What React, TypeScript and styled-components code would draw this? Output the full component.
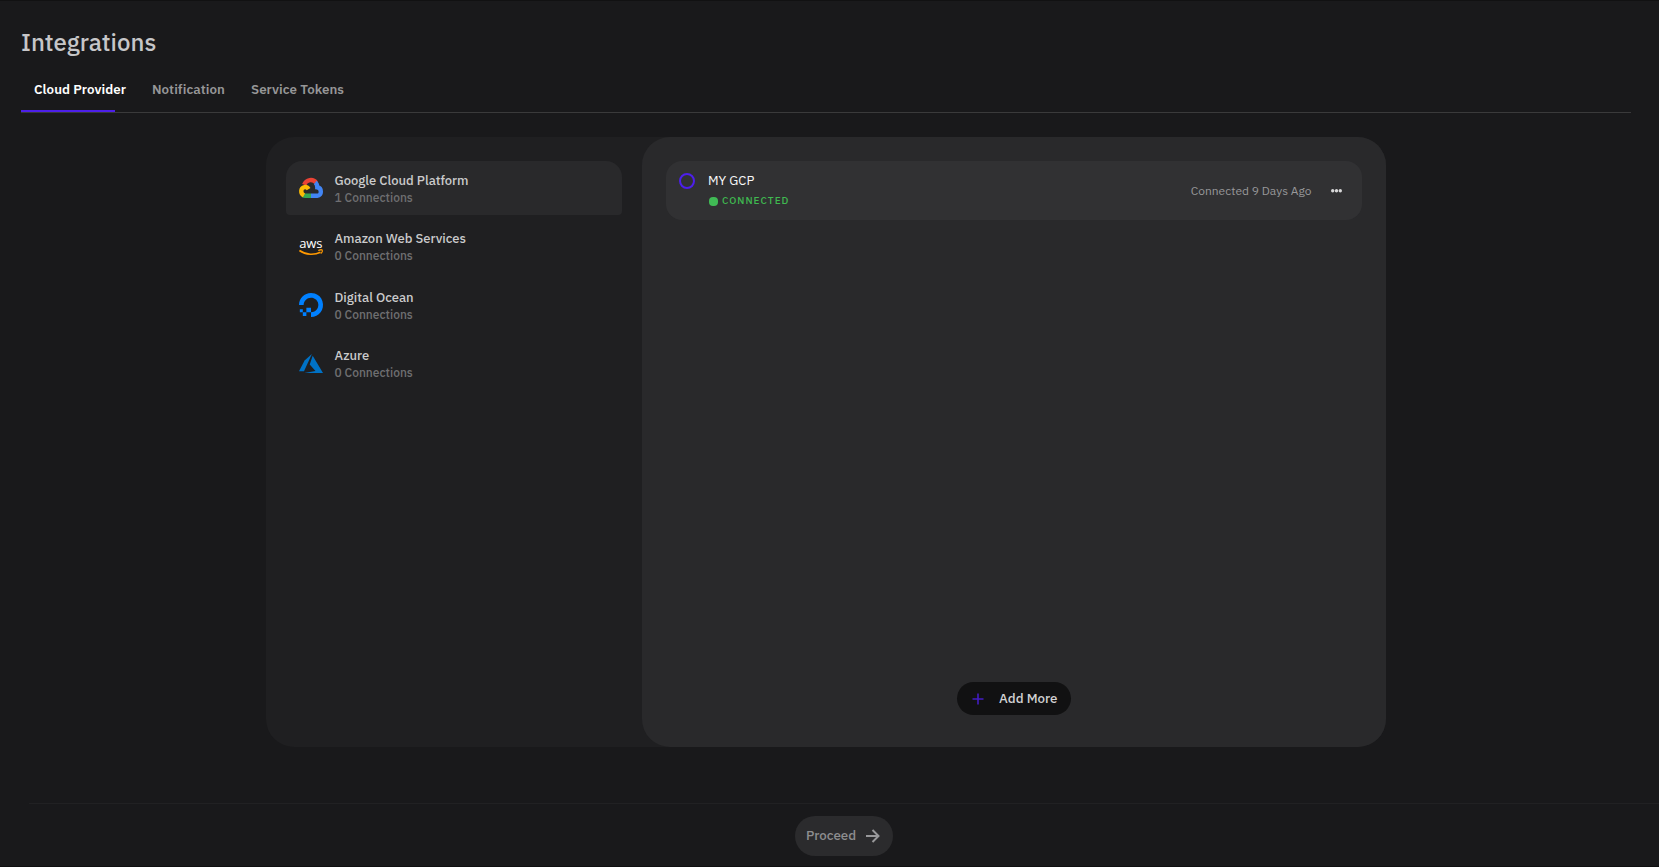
import React from "react";
import styled, { createGlobalStyle } from "styled-components";

const Global = createGlobalStyle`
  *{box-sizing:border-box}
  body{margin:0;background:#19191b;font-family:"IBM Plex Sans",Roboto,sans-serif;overflow:hidden}
  button{font-family:inherit;border:0;padding:0;background:none;text-align:left;white-space:nowrap}
`;

const Page = styled.div`
  height: 867px;
  display: flex;
  flex-direction: column;
  background: #19191b;
  border-top: 1px solid #111112;
  border-bottom: 1px solid #0f0f10;
`;
const Title = styled.h1`
  margin: 25px 0 0 21px;
  font-size: 24px;
  line-height: 32px;
  font-weight: 500;
  color: #c6c6c8;
`;
const Tabs = styled.nav`
  margin: 14px 28px 0 21px;
  height: 41px;
  display: flex;
  gap: 26px;
  padding-left: 13px;
  border-bottom: 1px solid #3a3a3b;
`;
const Tab = styled.button<{ $active?: boolean }>`
  height: 35px;
  font-size: 13.333px;
  line-height: 35px;
  font-weight: 600;
  letter-spacing: 0.05px;
  color: ${(p) => (p.$active ? "#fff" : "#969697")};
`;
const Indicator = styled.div`
  width: 94px;
  height: 2px;
  margin: -3px 0 0 21px;
  background: #4d1fea;
`;
const Board = styled.main`
  margin: 25px 0 0 266px;
  width: 1120px;
  height: 610px;
  display: flex;
  border-radius: 28px;
  background: #1f1f21;
`;
const Providers = styled.section`
  width: 376px;
  padding: 24px 20px;
  display: flex;
  flex-direction: column;
  gap: 4.4px;
`;
const Provider = styled.button<{ $active?: boolean }>`
  height: 54px;
  display: flex;
  align-items: center;
  gap: 11.5px;
  padding: 0 13px;
  border-radius: 16px 16px 4px 4px;
  background: ${(p) => (p.$active ? "#29292b" : "transparent")};
  svg {
    width: 24px;
    height: 24px;
    overflow: visible;
  }
`;
const Label = styled.div`
  padding-top: 2px;
`;
const Name = styled.div`
  font-size: 13px;
  line-height: 17px;
  font-weight: 500;
  color: #cbcbcc;
`;
const Count = styled.div`
  font-size: 12px;
  line-height: 17px;
  font-weight: 500;
  color: #6f6f71;
`;
const Connections = styled.section`
  flex: 1;
  padding: 24px 24px 32px;
  display: flex;
  flex-direction: column;
  align-items: center;
  justify-content: space-between;
  border-radius: 28px;
  background: #29292b;
`;
const Connection = styled.article`
  width: 100%;
  height: 59px;
  display: flex;
  padding: 0 20px 0 13px;
  border-radius: 16px;
  background: #313133;
`;
const Ring = styled.span`
  width: 16px;
  height: 16px;
  margin: 12px 13px 0 0;
  border: 2px solid #4d1fea;
  border-radius: 50%;
`;
const Details = styled.div`
  flex: 1;
  padding-top: 10px;
`;
const ConnectionName = styled.div`
  font-size: 13px;
  line-height: 19px;
  color: #f8f8f8;
`;
const Status = styled.div`
  display: flex;
  align-items: center;
  gap: 4px;
  margin-top: 3px;
  padding-left: 1px;
  font-size: 10px;
  line-height: 15px;
  font-weight: 500;
  letter-spacing: 1px;
  color: #3fb950;
  &::before {
    content: "";
    width: 9px;
    height: 9px;
    margin-top: 1px;
    border-radius: 4px;
    background: #40ba55;
  }
`;
const Age = styled.div`
  align-self: center;
  font-size: 12px;
  color: #98989a;
  margin-right: 19.5px;
`;
const More = styled.button`
  width: 11px;
  display: flex;
  align-items: center;
`;
const AddButton = styled.button`
  width: 114px;
  height: 33px;
  padding: 0 0 1px 15px;
  display: flex;
  align-items: center;
  gap: 15px;
  border-radius: 17px;
  background: #111112;
  color: #d2d2d3;
  font-size: 13.333px;
  font-weight: 500;
  svg {
    margin-top: 1px;
  }
`;
const Footer = styled.footer`
  margin: 56px 0 0 29px;
  padding: 12px 0 0 766px;
  border-top: 1px solid #212123;
`;
const Proceed = styled.button`
  width: 98px;
  height: 40px;
  padding: 0 0 2px 11px;
  display: flex;
  align-items: center;
  gap: 10px;
  border-radius: 20px;
  background: #2b2b2d;
  color: #8e8e90;
  font-size: 13.333px;
  font-weight: 500;
  svg {
    margin-top: 1px;
  }
`;

const GoogleCloudLogo = () => (
  <svg viewBox="0 0 24 24">
    <g fill="none" strokeWidth="4.4">
      <path stroke="#ea4335" d="M5.2 8.7C7.2 3.400 14 2.400 17.200 6.800" />
      <path stroke="#4285f4" d="M16.200 6.600C18 8 18.300 10 18.300 11.200C23 11.800 23 19.800 18.400 19.800H12" />
      <path stroke="#34a853" d="M12 19.800H6.200C5.400 19.800 4.600 19.600 3.800 19.100" />
      <path stroke="#fbbc05" d="M5 19.400C1.200 17.400 1.300 12 5.600 11.100C7.400 10.900 8.600 11.600 9.600 13.200" />
    </g>
  </svg>
);
const AwsLogo = () => (
  <svg viewBox="0 0 24 24">
    <text x="11.7" y="14" textAnchor="middle" fontFamily="Open Sans, sans-serif" fontSize="13" fontWeight="500" letterSpacing="-0.2" fill="#fff">aws</text>
    <path d="M.4 16.500C7 21.200 15.500 21.200 21.500 18.200" fill="none" stroke="#f90" strokeWidth="1.600" />
    <path d="M19.300 16.600C21 15.700 23 15.800 23.300 16.200C23.600 17 22.800 18.800 21.800 19.600" fill="none" stroke="#f90" strokeWidth="1.200" />
  </svg>
);
const DigitalOceanLogo = () => (
  <svg viewBox="0 0 24 24" fill="#0080ff">
    <path d="M12 24v-4.650c4.930 0 8.750-4.880 6.860-10.060a6.950 6.950 0 0 0-4.150-4.150C9.530 3.260 4.650 7.070 4.650 12H0C0 4.140 7.600-1.990 15.840.580c3.600 1.120 6.460 3.990 7.580 7.580C26 16.400 19.860 24 12 24z" />
    <path d="M7.370 14.740H12v4.610H7.370zM3.820 19.350h3.550v3.550H3.820zM.840 16.370h2.980v2.980H.840z" />
  </svg>
);
const AzureLogo = () => (
  <svg viewBox="0 -0.8 24 24" fill="#0072c6">
    <path d="M12.900 2.300 5.600 8.700 0 19.400h5z" />
    <path d="m13.700 3.900-3 8.800 5.800 6.600L5.300 21.100H24z" />
  </svg>
);

const providers = [
  { name: "Google Cloud Platform", count: 1, Logo: GoogleCloudLogo },
  { name: "Amazon Web Services", count: 0, Logo: AwsLogo },
  { name: "Digital Ocean", count: 0, Logo: DigitalOceanLogo },
  { name: "Azure", count: 0, Logo: AzureLogo },
];

export default function App() {
  return (
    <Page>
      <Global />
      <Title>Integrations</Title>
      <Tabs>
        <Tab $active>Cloud Provider</Tab>
        <Tab>Notification</Tab>
        <Tab>Service Tokens</Tab>
      </Tabs>
      <Indicator />
      <Board>
        <Providers>
          {providers.map(({ name, count, Logo }) => (
            <Provider key={name} $active={count > 0}>
              <Logo />
              <Label>
                <Name>{name}</Name>
                <Count>{count} Connections</Count>
              </Label>
            </Provider>
          ))}
        </Providers>
        <Connections>
          <Connection>
            <Ring />
            <Details>
              <ConnectionName>MY GCP</ConnectionName>
              <Status>CONNECTED</Status>
            </Details>
            <Age>Connected 9 Days Ago</Age>
            <More aria-label="More options">
              <svg width="11" height="4" fill="#d8d8d9">
                <circle cx="1.700" cy="1.700" r="1.700" />
                <circle cx="5.500" cy="1.700" r="1.700" />
                <circle cx="9.300" cy="1.700" r="1.700" />
              </svg>
            </More>
          </Connection>
          <AddButton>
            <svg width="12" height="12" fill="none" stroke="#431dc4" strokeWidth="1.600">
              <path d="M6 .5v11M.5 6h11" />
            </svg>
            Add More
          </AddButton>
        </Connections>
      </Board>
      <Footer>
        <Proceed>
          Proceed
          <svg width="14" height="14" fill="none" stroke="#98989a" strokeWidth="2">
            <path d="M0 7h12.500M6.500 1l6 6-6 6" />
          </svg>
        </Proceed>
      </Footer>
    </Page>
  );
}
